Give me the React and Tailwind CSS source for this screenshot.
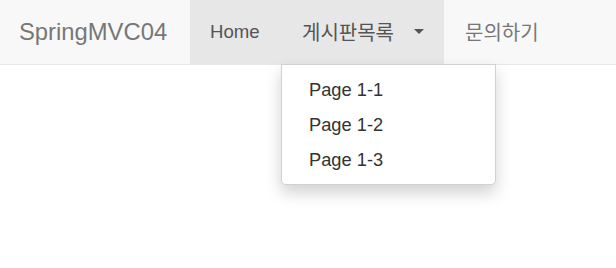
export default function App() {
  const font = { fontFamily: '"Liberation Sans", Arial, "Noto Sans CJK KR", sans-serif' };
  const kr = { fontFamily: '"Noto Sans CJK KR", "Liberation Sans", sans-serif' };
  return (
    <div className="w-[616px] h-[268px] bg-white relative" style={font}>
      <nav className="h-[65px] bg-[#f8f8f8] border-b border-[#e7e7e7] flex items-stretch">
        <div className="w-[190px] pl-[19px] flex items-center text-[23.8px] text-[#777] leading-none">SpringMVC04</div>
        <ul className="flex items-stretch">
          <li className="bg-[#e7e7e7] w-[91px] pl-[20px] flex items-center text-[18.6px] text-[#555]">Home</li>
          <li className="bg-[#e7e7e7] w-[163px] pl-[21px] flex items-center text-[#555] relative">
            <span className="text-[20px] leading-none" style={kr}>게시판목록</span>
            <span className="absolute left-[133px] top-[29px] w-0 h-0 border-l-[5px] border-r-[5px] border-t-[5px] border-l-transparent border-r-transparent border-t-[#555]"></span>
            <div className="absolute left-0 top-[64px] w-[215px] h-[121px] bg-white border border-[rgba(0,0,0,0.18)] rounded-b-[5px] shadow-[0_8px_16px_rgba(0,0,0,0.18)] pt-[7px] z-10">
              <ul className="text-[18.3px] text-[#333]">
                <li className="h-[35px] flex items-center pl-[27px]">Page 1-1</li>
                <li className="h-[35px] flex items-center pl-[27px]">Page 1-2</li>
                <li className="h-[35px] flex items-center pl-[27px]">Page 1-3</li>
              </ul>
            </div>
          </li>
          <li className="pl-[21px] flex items-center text-[#777]">
            <span className="text-[20px] leading-none" style={kr}>문의하기</span>
          </li>
        </ul>
      </nav>
    </div>
  );
}
